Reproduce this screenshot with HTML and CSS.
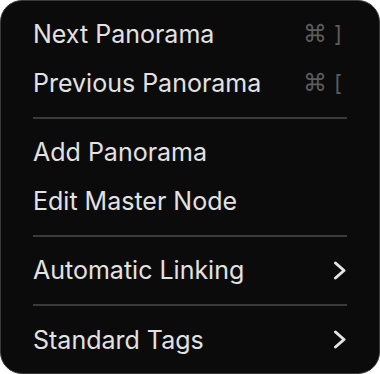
FILE: index.html
```html
<!DOCTYPE html>
<html>
<head>
<meta charset="utf-8">
<link rel="stylesheet" href="styles.css">
</head>
<body>
<div class="menu">
  <div class="item"><span class="label">Next Panorama</span><span class="shortcut"><span class="cmd">⌘</span><span class="key">]</span></span></div>
  <div class="item"><span class="label">Previous Panorama</span><span class="shortcut"><span class="cmd">⌘</span><span class="key">[</span></span></div>
  <div class="sep"></div>
  <div class="item"><span class="label">Add Panorama</span></div>
  <div class="item"><span class="label">Edit Master Node</span></div>
  <div class="sep"></div>
  <div class="item"><span class="label">Automatic Linking</span>
    <svg class="chev" width="14" height="19" viewBox="0 0 14 19"><path d="M2.5 2 L11 9.5 L2.5 17" fill="none" stroke="#e4e4e4" stroke-width="3" stroke-linecap="round" stroke-linejoin="round"/></svg>
  </div>
  <div class="sep"></div>
  <div class="item"><span class="label">Standard Tags</span>
    <svg class="chev" width="14" height="19" viewBox="0 0 14 19"><path d="M2.5 2 L11 9.5 L2.5 17" fill="none" stroke="#e4e4e4" stroke-width="3" stroke-linecap="round" stroke-linejoin="round"/></svg>
  </div>
</div>
</body>
</html>
```
FILE: styles.css
```css
html, body {
  margin: 0;
  padding: 0;
  background: #ffffff;
}
.menu {
  box-sizing: border-box;
  width: 380px;
  height: 374px;
  background: #0b0b0b;
  border: 1px solid #3a3a3a;
  border-radius: 22px;
  padding: 9px 32px 0 32px;
  display: flex;
  flex-direction: column;
  font-family: Inter, "Liberation Sans", sans-serif;
  color: #e2e2e2;
}
.item {
  height: 48.5px;
  flex-shrink: 0;
  display: flex;
  align-items: center;
  justify-content: space-between;
  font-size: 25px;
  line-height: 48.5px;
}
.shortcut {
  display: flex;
  align-items: center;
  gap: 7px;
  color: #5c5c5c;
  font-size: 22px;
  padding-right: 5px;
}
.cmd {
  font-family: "DejaVu Sans", sans-serif;
  font-size: 24px;
}
.chev {
  margin-right: 0;
}
.sep {
  height: 2px;
  background: #3a3a3a;
  margin: 9.5px 0 9.5px 0;
  flex-shrink: 0;
}
```
